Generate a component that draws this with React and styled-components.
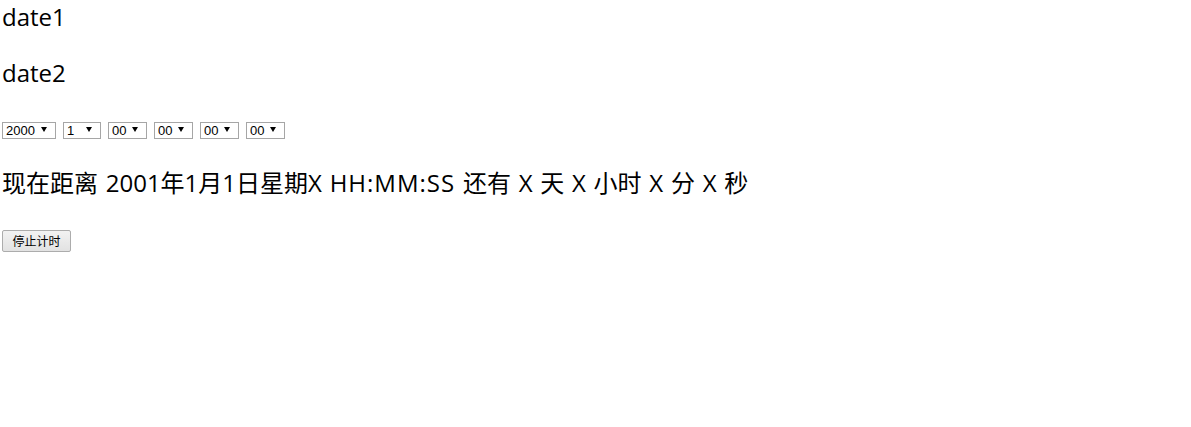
import React, { useState } from 'react';
import styled, { createGlobalStyle } from 'styled-components';

const GlobalStyle = createGlobalStyle`
    body {
        margin: 0;
        background: #fff;
        color: #000;
        font-family: "Open Sans", "Noto Sans CJK SC", sans-serif;
    }
`;

const Page = styled.div`
    padding: 1px 2px 0 2px;
    display: flex;
    flex-direction: column;
    align-items: flex-start;
`;

const Line = styled.div`
    font-size: 24px;
    line-height: 32px;
    height: 32px;
    word-spacing: 1.5px;
    margin-bottom: ${props => props.gap}px;
    white-space: nowrap;

    .time {
        letter-spacing: 1px;
    }
`;

const SelectRow = styled.div`
    display: flex;
    flex-direction: row;
    gap: 7px;
    margin-bottom: 28px;
`;

const SelectWrap = styled.div`
    position: relative;
    width: ${props => props.width}px;
    height: 17px;

    select {
        display: block;
        appearance: none;
        -webkit-appearance: none;
        width: 100%;
        height: 100%;
        box-sizing: border-box;
        border: 1px solid #a6a6a6;
        border-radius: 0;
        background: #fff;
        padding: 0 0 0 3px;
        font-family: "Liberation Sans", "Noto Sans CJK SC", sans-serif;
        font-size: 13px;
        line-height: 15px;
        color: #000;
        outline: none;
    }

    .arrow {
        position: absolute;
        right: 9px;
        top: 5px;
        pointer-events: none;
    }
`;

const StopButton = styled.button`
    height: 22px;
    width: 69px;
    box-sizing: border-box;
    padding: 0;
    border: 1px solid #acacac;
    border-radius: 2px;
    background: linear-gradient(#f2f2f2, #e2e2e2);
    font-family: "Noto Sans CJK SC", sans-serif;
    font-size: 12px;
    line-height: 18px;
    color: #000;
`;

const Arrow = () => (
    <svg className='arrow' width='6' height='5' viewBox='0 0 6 5'>
        <path d='M0 0 H6 L3 5 Z' fill='#000' />
    </svg>
);

const range = (from, to) => Array.from({ length: to - from + 1 }, (_, i) => from + i);
const pad = n => String(n).padStart(2, '0');

const selects = [
    { key: 'year', width: 54, options: range(2000, 2030).map(String) },
    { key: 'month', width: 38, options: range(1, 12).map(String) },
    { key: 'day', width: 39, options: range(0, 31).map(pad) },
    { key: 'hour', width: 39, options: range(0, 23).map(pad) },
    { key: 'minute', width: 39, options: range(0, 59).map(pad) },
    { key: 'second', width: 39, options: range(0, 59).map(pad) },
];

const App = () => {
    const [values, setValues] = useState({});

    return (
        <Page>
            <GlobalStyle />
            <Line gap={24}>date1</Line>
            <Line gap={33}>date2</Line>
            <SelectRow>
                {selects.map(s => (
                    <SelectWrap key={s.key} width={s.width}>
                        <select
                            value={values[s.key] ?? s.options[0]}
                            onChange={e => setValues({ ...values, [s.key]: e.target.value })}
                        >
                            {s.options.map(o => <option key={o} value={o}>{o}</option>)}
                        </select>
                        <Arrow />
                    </SelectWrap>
                ))}
            </SelectRow>
            <Line gap={31}>
                现在距离 2001年1月1日星期X <span className='time'>HH:MM:SS</span> 还有 X 天 X 小时 X 分 X 秒
            </Line>
            <StopButton>停止计时</StopButton>
        </Page>
    );
};

export default App;
